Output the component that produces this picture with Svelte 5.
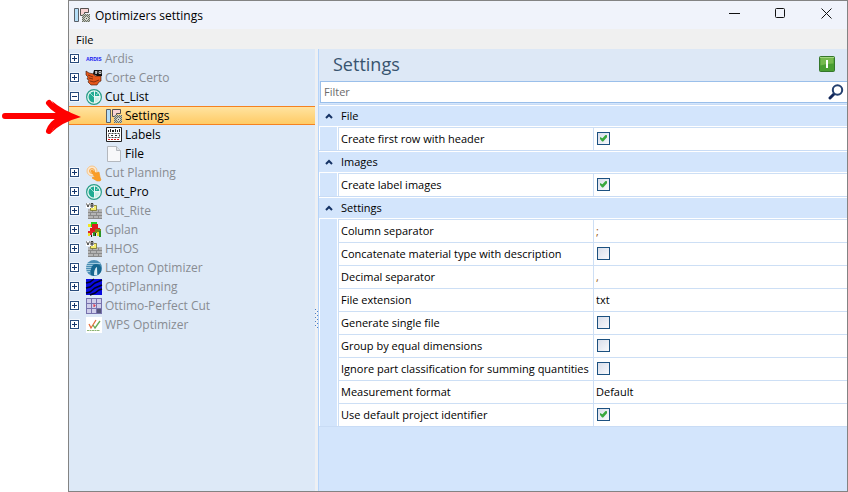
<script>
	let tree = $state([
		{ label: 'Ardis', icon: 'ardis' },
		{ label: 'Corte Certo', icon: 'certo' },
		{
			label: 'Cut_List',
			icon: 'globe',
			active: true,
			open: true,
			children: [
				{ label: 'Settings', icon: 'optimizer' },
				{ label: 'Labels', icon: 'labels' },
				{ label: 'File', icon: 'file' }
			]
		},
		{ label: 'Cut Planning', icon: 'hand' },
		{ label: 'Cut_Pro', icon: 'globe', active: true },
		{ label: 'Cut_Rite', icon: 'bricks' },
		{ label: 'Gplan', icon: 'gplan' },
		{ label: 'HHOS', icon: 'bricks' },
		{ label: 'Lepton Optimizer', icon: 'lepton' },
		{ label: 'OptiPlanning', icon: 'stripes' },
		{ label: 'Ottimo-Perfect Cut', icon: 'ottimo' },
		{ label: 'WPS Optimizer', icon: 'wps' }
	]);

	let groups = $state([
		{
			name: 'File',
			open: true,
			rows: [{ label: 'Create first row with header', value: true }]
		},
		{
			name: 'Images',
			open: true,
			rows: [{ label: 'Create label images', value: true }]
		},
		{
			name: 'Settings',
			open: true,
			rows: [
				{ label: 'Column separator', value: ';' },
				{ label: 'Concatenate material type with description', value: false },
				{ label: 'Decimal separator', value: ',' },
				{ label: 'File extension', value: 'txt' },
				{ label: 'Generate single file', value: false },
				{ label: 'Group by equal dimensions', value: false },
				{ label: 'Ignore part classification for summing quantities', value: false },
				{ label: 'Measurement format', value: 'Default' },
				{ label: 'Use default project identifier', value: true }
			]
		}
	]);

	let selected = $state('Settings');
	let filter = $state('');

	const matches = (row) => row.label.toLowerCase().includes(filter.toLowerCase());
	const fieldId = (label) => label.toLowerCase().replaceAll(' ', '-');
</script>

{#snippet icon(name)}
	<svg class="icon" viewBox="0 0 16 16" aria-hidden="true">
		{#if name === 'optimizer'}
			<path d="M.5 1.5h4v13h-4z" fill="#b5def8" stroke="#5a6068" />
			<path d="M6.500 1.500h8v4h-4v3h-4z" fill="#f8d3d3" stroke="#55504e" />
			<path d="M8 7h8v8H8z" fill="#686c66" />
			<path d="M8 7.500h8M8 9.500h8M8 11.500h8M8 13.500h8" stroke="#c9cec0" stroke-dasharray="1 1" />
			<path
				d="M8 8.500h8M8 10.500h8M8 12.500h8M8 14.500h8"
				stroke="#b5bbae"
				stroke-dasharray="1 1"
				stroke-dashoffset="1"
			/>
			<path d="M11 10h3v3h-3z" fill="#d5d8cd" />
			<path d="M12 11h1v1h-1z" fill="#555" />
		{:else if name === 'labels'}
			<path d="M.5 .5h15v14H.5z" fill="#fff" stroke="#222" />
			<path d="M2 3h1v2H2zM4 2h1v3H4zM6 3h2v2H6zM9 2h1v3H9zM11 3h1v2h-1zM13 2h1v3h-1z" fill="#222" />
			<path d="M2.500 6.500h11v4h-11z" fill="none" stroke="#444" stroke-dasharray="2 1" />
			<path d="M5 8.500h2M9 8.500h2" stroke="#333" />
			<path d="M2 12.500h12" stroke="#e11b1b" stroke-dasharray="2 1" />
		{:else if name === 'file'}
			<path d="M1.5.5h9l4 4v11h-13z" fill="#f7f8fa" stroke="#b4b8be" />
			<path d="M10.5.5v4h4" fill="#dfe3e8" stroke="#b4b8be" />
		{:else if name === 'ardis'}
			<text x="0" y="10" class="ardis">ARDIS</text>
		{:else if name === 'certo'}
			<path
				d="M0 1l3 2 5 1 1 2h6v5l-2 1-2 3H5l-3-3 1-2-2-1 1-2-2-2z"
				fill="#e4571b"
				stroke="#391507"
				stroke-width=".6"
			/>
			<path d="M2 5l5 2M3 8l4 1M4 11l4 1 5-2" fill="none" stroke="#6b2509" stroke-width=".8" />
			<path d="M8 0h8v6h-5L7 4z" fill="#111" />
			<path d="M9 1.500h2v1H9.500v1H11M13 1.500h2v2h-2z" fill="none" stroke="#fff" stroke-width=".7" />
		{:else if name === 'globe'}
			<circle cx="8" cy="8" r="7.400" fill="#eaf8f5" stroke="#2b9d88" stroke-width="1.200" />
			<path d="M8 2.500A5.500 5.500 0 1 0 8 13.500z" fill="#21ab92" />
			<path d="M9 2.600a5.500 5.500 0 0 1 4.400 4.400H9z" fill="#21ab92" />
			<path d="M4 4l4 4M10 6l2.500-2" fill="none" stroke="#d5f1eb" stroke-width=".7" />
			<path d="M9 8.500h4.500A5.500 5.500 0 0 1 9 13.400z" fill="#cdeee8" />
		{:else if name === 'hand'}
			<circle cx="6" cy="6" r="5" fill="#fde8ce" stroke="#f6c68b" />
			<circle cx="6" cy="6" r="2.500" fill="#fbd39f" stroke="#f5ad55" />
			<path
				d="M5 6l1-1 4 3 3-1 1 5 1 3-1 1h-3l-5-3 1-1 2 .5z"
				fill="#fa9d27"
				stroke="#f09420"
				stroke-width=".6"
			/>
		{:else if name === 'bricks'}
			<path d="M2 6h14v10H2z" fill="#b4b4b4" />
			<path
				d="M2 9.500h14M2 12.500h14M2 15.500h14M6.500 7v2M12.500 7v2M4.500 10v2M10.500 10v2M7.500 13v2M12.500 13v2"
				stroke="#8a8a8a"
			/>
			<path d="M4.500 2.500h6v5h-6z" fill="#f5ed70" stroke="#77722c" stroke-width=".8" />
			<path d="M0 0h8v5H0z" fill="#fff" />
			<path d="M.5 .5L2 4 3.500.5M5 .5h2v3.500H5zM5 2.200h2" fill="none" stroke="#111" stroke-width=".8" />
		{:else if name === 'gplan'}
			<path d="M2 2h4v3H2z" fill="#f4e71b" />
			<path d="M5 0h6v5H5z" fill="#23ce21" />
			<path d="M6 2h6v4h2v3H4V6h2z" fill="#dd1c20" />
			<path d="M9 7h6v4H9z" fill="#7d861b" />
			<path d="M2 9h7v2H2zM4 11h2v2H4z" fill="#de2529" />
			<path d="M2 11h2v3H2zM11 10h2v4h-2z" fill="#eee02b" />
			<path d="M7 10h2v4H7zM13 9h2v6h-2z" fill="#299426" />
			<path d="M9 11h1v3H9zM5 13h1v2H5z" fill="#222" />
		{:else if name === 'lepton'}
			<circle cx="8" cy="8" r="8" fill="#4a8db4" />
			<path d="M1 3.500h13M0 5.500h8M0 7.500h6M0 9.500h5M0 11.500h4" stroke="#b9d9e9" stroke-width=".8" />
			<path d="M5 15C4 8 6 4 10 4c5 0 6 4 5 8l-3 3-1-8c-2 1-3 4-3 9z" fill="#17668f" />
			<path d="M8 15c0-4 1-7 3-8v8" fill="#d9eaf2" />
		{:else if name === 'stripes'}
			<path d="M0 0h16v16H0z" fill="#0809e0" />
			<path
				d="M0 4l4-1 4-3M0 9l4-1 5-4 7-3M0 14l4-1 5-4 7-3M4 16l5-2 4-3 3-1"
				fill="none"
				stroke="#020225"
				stroke-width="1.500"
			/>
		{:else if name === 'ottimo'}
			<path d="M0 0h16v16H0z" fill="#7772ad" />
			<path
				d="M1 1h4v4H1zM6 1h4v4H6zM11 1h4v4h-4zM1 6h4v4H1zM6 6h4v4H6zM11 6h4v4h-4zM1 11h4v4H1zM6 11h4v4H6z"
				fill="#cfceea"
			/>
			<path d="M7 7h2v1H8v1" fill="none" stroke="#e33546" />
			<path d="M11 11h4v4h-4z" fill="#55557b" />
		{:else if name === 'wps'}
			<path d="M0 0h16v16H0z" fill="#fff" />
			<path d="M3 7l2 4 5-8" fill="none" stroke="#e66c3c" stroke-width="1.300" />
			<path d="M7 8l2 3 5-7" fill="none" stroke="#68aa56" stroke-width="1.300" />
			<path d="M1 13.500h13" stroke="#8cb573" stroke-dasharray="2 .5" />
		{/if}
	</svg>
{/snippet}

{#snippet treeItem(item)}
	<button
		class="node"
		class:muted={!item.active}
		aria-pressed={selected === item.label}
		onclick={() => (selected = item.label)}
	>
		{@render icon(item.icon)}
		<span>{item.label}</span>
	</button>
{/snippet}

<div class="page">
	<svg class="pointer" viewBox="0 0 82 40" aria-hidden="true">
		<path
			d="M5 19H65M49 6Q56 15 68 18M49 34Q52 26 62 21"
			fill="none"
			stroke="#f00"
			stroke-width="6"
			stroke-linecap="round"
			stroke-linejoin="round"
		/>
		<path d="M52 4Q62 13 81 20Q62 25 51 36L60 20z" fill="#f00" />
	</svg>

	<main class="window">
		<header class="titlebar">
			{@render icon('optimizer')}
			<h1>Optimizers settings</h1>
			<div class="controls">
				<button aria-label="Minimize">
					<svg viewBox="0 0 11 11"><path d="M0 5.500h11" /></svg>
				</button>
				<button aria-label="Maximize">
					<svg viewBox="0 0 11 11"><rect x=".5" y=".5" width="9" height="9" rx="1" /></svg>
				</button>
				<button aria-label="Close">
					<svg viewBox="0 0 11 11"><path d="M.5.5l10 10M10.500.5l-10 10" /></svg>
				</button>
			</div>
		</header>

		<nav class="menubar"><button>File</button></nav>

		<div class="body">
			<ul class="tree">
				{#each tree as item}
					<li>
						<div class="branch">
							<button
								class="toggle"
								class:open={item.open}
								aria-label="Expand {item.label}"
								aria-expanded={!!item.open}
								onclick={() => (item.open = !item.open)}
							></button>
							{@render treeItem(item)}
						</div>
						{#if item.open && item.children}
							<ul>
								{#each item.children as child}
									<li class="branch child" class:selected={selected === child.label}>
										{@render treeItem({ ...child, active: true })}
									</li>
								{/each}
							</ul>
						{/if}
					</li>
				{/each}
			</ul>

			<div class="splitter">
				<svg viewBox="0 0 3 20" aria-hidden="true">
					<path d="M.5 0v20" />
					<path d="M2.500 2v18" />
				</svg>
			</div>

			<section class="panel">
				<div class="heading">
					<h2>Settings</h2>
					<button class="power" aria-label="Active">
						<svg viewBox="0 0 16 16" aria-hidden="true">
							<rect x=".5" y=".5" width="15" height="15" rx="1" fill="#4a9e32" stroke="#34772b" />
							<path d="M1.500 1.500h13v6q-7 0-13 2z" fill="#75b94e" />
							<path d="M1 1.500h14" stroke="#a3d581" />
							<path d="M7 4h2v8H7z" fill="#fff" />
						</svg>
					</button>
				</div>

				<div class="filter">
					<input type="text" aria-label="Filter" placeholder="Filter" bind:value={filter} />
					<svg viewBox="0 0 16 16" aria-hidden="true">
						<path d="M6 10l-4 4" stroke="#12275a" stroke-width="3" stroke-linecap="round" />
						<circle cx="9.500" cy="6" r="4.700" fill="#fff" stroke="#24406f" stroke-width="2" />
					</svg>
				</div>

				<table>
					<colgroup>
						<col class="gutter-col" />
						<col class="name-col" />
						<col />
					</colgroup>
					{#each groups as group}
						<tbody>
							<tr class="group">
								<th colspan="3" scope="rowgroup">
									<button aria-expanded={group.open} onclick={() => (group.open = !group.open)}>
										<svg viewBox="0 0 8 6" class:closed={!group.open} aria-hidden="true">
											<path d="M1 5l3-3 3 3" />
										</svg>
										{group.name}
									</button>
								</th>
							</tr>
							{#if group.open}
								{#each group.rows.filter(matches) as row}
									<tr>
										<td class="gutter"></td>
										<td class="name"><label for={fieldId(row.label)}>{row.label}</label></td>
										<td class="value">
											{#if typeof row.value === 'boolean'}
												<input id={fieldId(row.label)} type="checkbox" bind:checked={row.value} />
											{:else}
												<input
													id={fieldId(row.label)}
													class:mark={row.value.length === 1}
													type="text"
													bind:value={row.value}
												/>
											{/if}
										</td>
									</tr>
								{/each}
							{/if}
						</tbody>
					{/each}
				</table>
			</section>
		</div>
	</main>
</div>

<style>
	:global(body) {
		background: #fff;
	}

	.page {
		position: relative;
		box-sizing: border-box;
		display: flex;
		min-height: 100vh;
		padding-left: 68px;
		font-family: 'Open Sans', 'Noto Sans', sans-serif;
		font-size: 11px;
		color: #000;
	}

	.page * {
		box-sizing: border-box;
	}

	.pointer {
		position: absolute;
		left: 0;
		top: 97px;
		width: 82px;
		height: 40px;
		z-index: 1;
	}

	button,
	input {
		margin: 0;
		padding: 0;
		border: 0;
		background: none;
		color: inherit;
		font: inherit;
	}

	svg {
		display: block;
		flex: none;
	}

	.window {
		flex: 1;
		display: flex;
		flex-direction: column;
		border: 1px solid #838383;
	}

	.titlebar {
		display: flex;
		align-items: center;
		height: 28px;
		padding-left: 5px;
		background: #f0f3fb;
	}

	h1 {
		flex: 1;
		margin: 0 0 0 5px;
		font-size: 12px;
		font-weight: 400;
	}

	.icon {
		width: 16px;
		height: 16px;
		overflow: visible;
	}

	.ardis {
		font: bold 5px 'Liberation Sans', sans-serif;
		fill: #1515f0;
	}

	.controls {
		display: flex;
		gap: 4px;
		align-self: stretch;
	}

	.controls button {
		display: grid;
		place-items: center;
		width: 42px;
		padding-bottom: 3px;
	}

	.controls svg {
		width: 11px;
		height: 11px;
		fill: none;
		stroke: #111;
	}

	.menubar {
		display: flex;
		align-items: center;
		height: 20px;
		padding-left: 7px;
		background: #f0f0f0;
	}

	.body {
		flex: 1;
		display: flex;
	}

	.tree {
		flex: 0 0 246px;
		background: #dde9f7;
		font-size: 12px;
	}

	ul {
		margin: 0;
		padding: 0;
		list-style: none;
	}

	.branch {
		display: flex;
		align-items: center;
		height: 19px;
		padding-left: 1px;
	}

	.child {
		padding-left: 37px;
	}

	.child.selected {
		border: solid #f58220;
		border-width: 1px 0;
		background: linear-gradient(#ffe3a0, #ffcb65);
	}

	.toggle {
		width: 9px;
		height: 9px;
		margin-right: 7px;
		border: 1px solid #294c7c;
		background:
			linear-gradient(#15366b, #15366b) center / 5px 1px no-repeat,
			linear-gradient(#15366b, #15366b) center / 1px 5px no-repeat,
			#fff;
		box-shadow: 0 0 0 1px #f2f7fd;
	}

	.toggle.open {
		background: linear-gradient(#15366b, #15366b) center / 5px 1px no-repeat, #fff;
	}

	.node {
		display: flex;
		align-items: center;
		gap: 3px;
		line-height: 16px;
		white-space: nowrap;
	}

	.muted {
		color: #888c92;
	}

	.splitter {
		display: flex;
		align-items: center;
		flex: 0 0 4px;
		padding-top: 98px;
		border-right: 1px solid #b5d4fa;
		background: #edf0f4;
	}

	.splitter svg {
		width: 3px;
		height: 20px;
		stroke: #4d7fc4;
		stroke-dasharray: 1 3;
	}

	.panel {
		flex: 1;
		min-width: 0;
		background: #d3e5fc;
	}

	.heading {
		display: flex;
		align-items: center;
		justify-content: space-between;
		height: 32px;
		padding: 0 12px 2px 14px;
		background: #dde8f6;
	}

	h2 {
		margin: 0;
		font-size: 18px;
		font-weight: 400;
		line-height: 24px;
		color: #38546f;
	}

	.power svg,
	.filter svg {
		width: 16px;
		height: 16px;
	}

	.filter {
		display: flex;
		align-items: center;
		height: 22px;
		margin: 0 0 1px 1px;
		padding: 0 3px 1px;
		border: 1px solid #9abfea;
		border-right: 0;
		background: #fff;
	}

	.filter input {
		flex: 1;
		min-width: 0;
		outline: none;
	}

	.filter input::placeholder {
		color: #6b6b6b;
		opacity: 1;
	}

	table {
		width: 100%;
		border-collapse: separate;
		border-spacing: 0;
		table-layout: fixed;
		border-bottom: 1px solid #c9dcf5;
	}

	.gutter-col {
		width: 19px;
	}

	.name-col {
		width: 255px;
	}

	th,
	td {
		height: 23px;
		padding: 0;
		text-align: left;
		font-weight: 400;
	}

	.group th {
		border-top: 1px solid #c9dcf5;
		border-bottom: 1px solid #fff;
		box-shadow: inset 0 1px #fff;
	}

	.group button {
		display: flex;
		align-items: center;
		gap: 8px;
		width: 100%;
		height: 21px;
		padding-left: 6px;
	}

	.group svg {
		width: 8px;
		height: 6px;
		fill: none;
		stroke: #153365;
		stroke-width: 2;
	}

	.group svg.closed {
		transform: rotate(180deg);
	}

	.gutter {
		border-left: 1px solid #fff;
		border-right: 1px solid #fff;
	}

	.name,
	.value {
		padding: 0 0 2px 2px;
		border-top: 1px solid #cddff5;
		border-left: 1px solid #cddff5;
		background: #fff;
		white-space: nowrap;
	}

	.value input {
		display: block;
	}

	.value input[type='text'] {
		width: 100%;
		height: 20px;
	}

	.value .mark {
		color: #9a5b20;
	}

	input[type='checkbox'] {
		appearance: none;
		width: 13px;
		height: 13px;
		margin-left: 1px;
		border: 1px solid #1c5180;
		background: linear-gradient(135deg, #d9deea, #f8f9fc);
	}

	input[type='checkbox']:checked::before {
		content: '';
		display: block;
		width: 7px;
		height: 7px;
		margin: 2px;
		background: #39a83e;
		clip-path: polygon(0 35%, 35% 55%, 85% 0, 100% 15%, 100% 40%, 45% 100%, 30% 100%, 0 65%);
	}
</style>
